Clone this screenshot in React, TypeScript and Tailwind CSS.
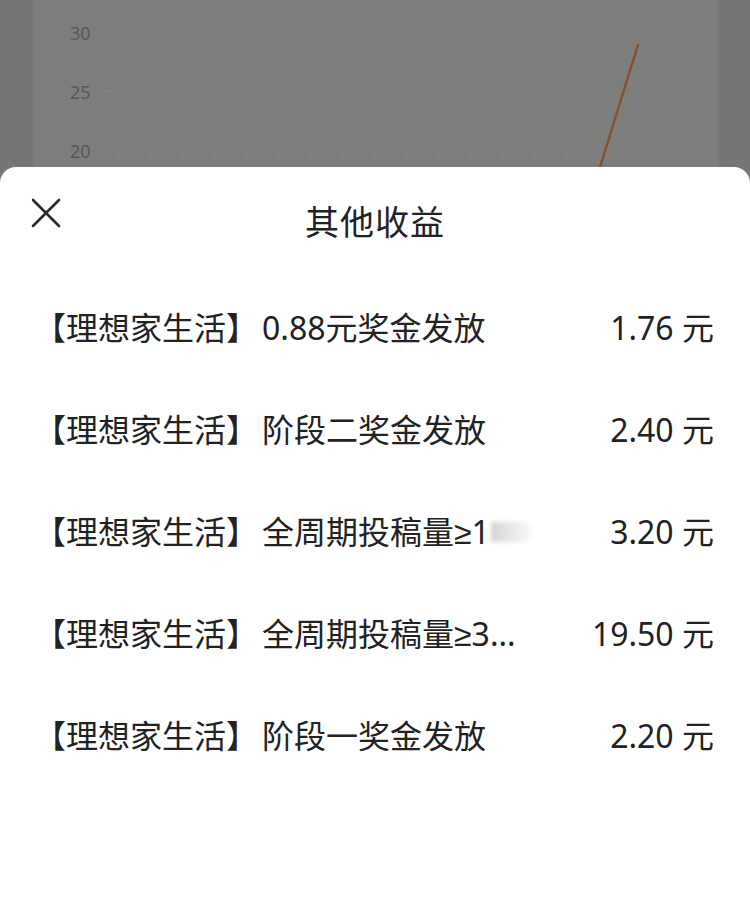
import React from "react";

const rows = [
  { name: "0.88元奖金发放", amount: "1.76 元" },
  { name: "阶段二奖金发放", amount: "2.40 元" },
  { name: "全周期投稿量≥1", amount: "3.20 元", fade: true },
  { name: "全周期投稿量≥3...", amount: "19.50 元" },
  { name: "阶段一奖金发放", amount: "2.20 元" },
];

function Name({ text }: { text: string }) {
  const parts = text.split("≥");
  if (parts.length === 1) return <span>{text}</span>;
  return (
    <span>
      {parts[0]}
      <span className="font-['Liberation_Sans',sans-serif]">≥</span>
      {parts[1]}
    </span>
  );
}

export default function App() {
  return (
    <div
      className="relative flex h-[921px] w-[750px] flex-col overflow-hidden bg-[#767676]"
      style={{ fontFamily: '"Noto Sans", "Noto Sans CJK SC", sans-serif' }}
    >
      {/* background chart */}
      <div className="flex h-[167px] shrink-0">
        <div className="w-[33px] shrink-0" />
        <div className="relative flex-1 bg-[#7d7e7b]">
          <div className="flex w-[60px] flex-col pl-[37px] pt-[20px] text-[18px] leading-[26px] text-[#575757]">
            <div className="h-[59px]">30</div>
            <div className="h-[59px]">25</div>
            <div className="h-[59px]">20</div>
          </div>
          <svg className="absolute left-0 top-0" width="685" height="167" viewBox="0 0 685 167">
            <line x1="85" y1="155" x2="560" y2="155" stroke="#8a8b88" strokeWidth="1.5" strokeDasharray="2 30" />
            <line x1="72" y1="91" x2="82" y2="91" stroke="#868784" strokeWidth="1" />
            <line x1="567" y1="167" x2="605" y2="45" stroke="#85502c" strokeWidth="2.5" strokeLinecap="round" />
          </svg>
        </div>
        <div className="w-[32px] shrink-0" />
      </div>

      {/* sheet */}
      <div className="flex flex-1 flex-col rounded-t-[16px] bg-white text-[#222]">
        <div className="relative h-[110px] shrink-0">
          <svg
            className="absolute left-[30px] top-[30px]"
            width="32"
            height="32"
            viewBox="0 0 32 32"
          >
            <path d="M3 3 L29 29 M29 3 L3 29" stroke="#2a2a2a" strokeWidth="2.6" strokeLinecap="round" />
          </svg>
          <div className="pt-[38px] text-center text-[34px] leading-none tracking-[1px]">其他收益</div>
        </div>
        {rows.map((r, i) => (
          <div key={i} className="flex h-[102px] shrink-0 items-center pl-[34px] pr-[36px] text-[32px]">
            <div className="flex flex-1 items-center whitespace-nowrap">
              <span>【理想家生活】</span>
              <span className="ml-[4px]">
                <Name text={r.name} />
              </span>
              {r.fade && (
                <span className="ml-[1px] h-[20px] w-[44px] bg-gradient-to-r from-[#d4d4d4] to-white blur-[2px]" />
              )}
            </div>
            <div className="whitespace-nowrap">{r.amount}</div>
          </div>
        ))}
      </div>
    </div>
  );
}
